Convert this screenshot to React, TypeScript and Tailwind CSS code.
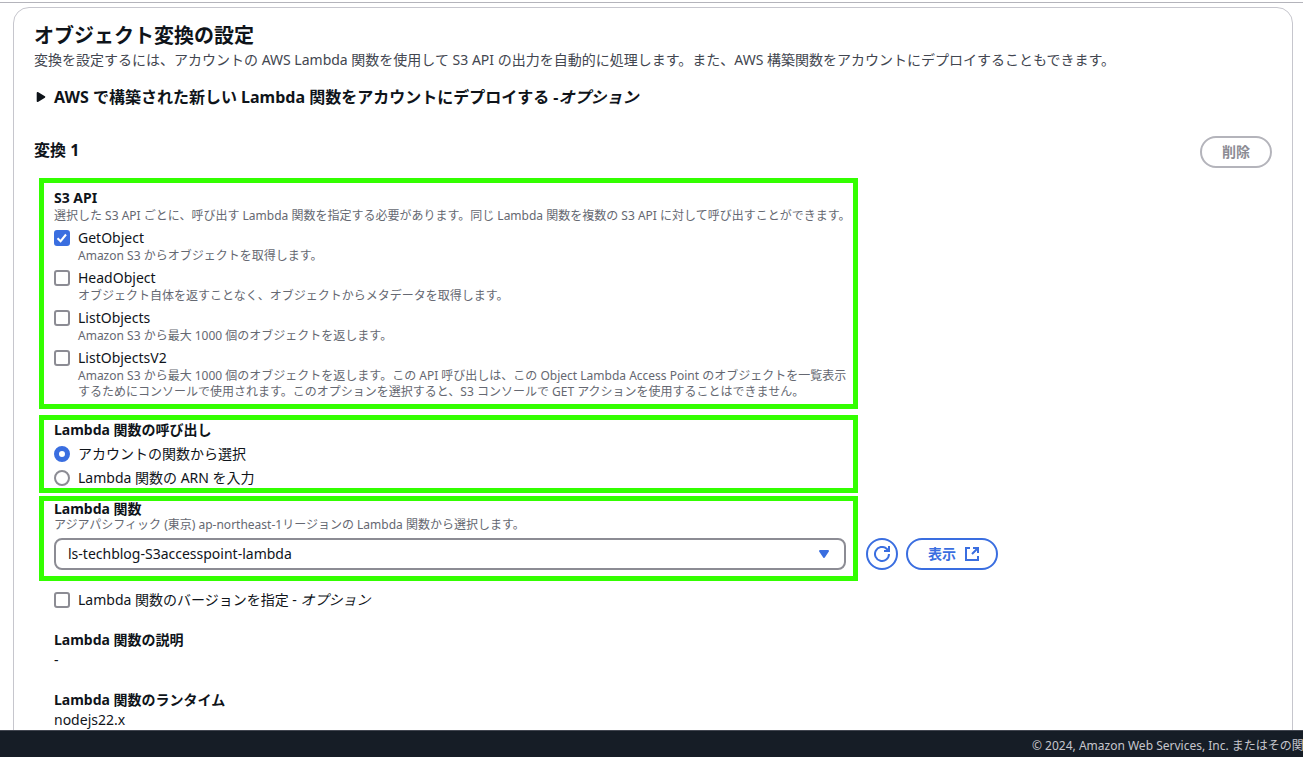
import { useState } from 'react';
import type { ReactNode } from 'react';

interface ApiOption {
  id: string;
  label: string;
  help: ReactNode;
}

const API_OPTIONS: ApiOption[] = [
  { id: 'GetObject', label: 'GetObject', help: 'Amazon S3 からオブジェクトを取得します。' },
  {
    id: 'HeadObject',
    label: 'HeadObject',
    help: 'オブジェクト自体を返すことなく、オブジェクトからメタデータを取得します。',
  },
  { id: 'ListObjects', label: 'ListObjects', help: 'Amazon S3 から最大 1000 個のオブジェクトを返します。' },
  {
    id: 'ListObjectsV2',
    label: 'ListObjectsV2',
    help: (
      <>
        Amazon S3 から最大 1000 個のオブジェクトを返します。この API 呼び出しは、この Object Lambda Access Point のオブジェクトを一覧表示
        <br />
        するためにコンソールで使用されます。このオプションを選択すると、S3 コンソールで GET アクションを使用することはできません。
      </>
    ),
  },
];

interface CheckboxProps {
  id: string;
  checked: boolean;
  onChange: () => void;
  label: ReactNode;
  help?: ReactNode;
}

function Checkbox({ id, checked, onChange, label, help }: CheckboxProps) {
  return (
    <div className="flex gap-2">
      <span className="relative mt-0.5 size-4 shrink-0">
        <input
          id={id}
          type="checkbox"
          checked={checked}
          onChange={onChange}
          aria-describedby={help ? `${id}-help` : undefined}
          className="block size-4 appearance-none rounded-[3px] border-2 border-[#8c8c94] bg-white checked:border-[#3a6ee0] checked:bg-[#3a6ee0]"
        />
        {checked && (
          <svg viewBox="0 0 16 16" className="pointer-events-none absolute inset-0 size-4" aria-hidden="true">
            <path d="M3.5 8.2 6.6 11.2 12 4.5" fill="none" stroke="#fff" strokeWidth="2" />
          </svg>
        )}
      </span>
      <div>
        <label htmlFor={id} className="block text-sm leading-5">
          {label}
        </label>
        {help && (
          <p id={`${id}-help`} className="text-xs leading-4 whitespace-nowrap text-[#656871]">
            {help}
          </p>
        )}
      </div>
    </div>
  );
}

interface RadioProps {
  id: string;
  name: string;
  checked: boolean;
  onChange: () => void;
  label: string;
}

function Radio({ id, name, checked, onChange, label }: RadioProps) {
  return (
    <div className="flex gap-2">
      <input
        id={id}
        name={name}
        type="radio"
        checked={checked}
        onChange={onChange}
        className="mt-0.5 block size-4 shrink-0 appearance-none rounded-full border-2 border-[#8c8c94] bg-white checked:border-5 checked:border-[#3a6ee0]"
      />
      <label htmlFor={id} className="text-sm leading-5">
        {label}
      </label>
    </div>
  );
}

export default function App() {
  const [apis, setApis] = useState<string[]>(['GetObject']);
  const [source, setSource] = useState('account');
  const [withVersion, setWithVersion] = useState(false);

  const toggleApi = (id: string) => {
    setApis((prev) => (prev.includes(id) ? prev.filter((a) => a !== id) : [...prev, id]));
  };

  return (
    <div className="flex h-screen flex-col overflow-hidden bg-white font-['Noto_Sans','Noto_Sans_CJK_JP',sans-serif] text-[#0f141a]">
      <main className="min-h-0 flex-1 overflow-hidden pt-0.5">
        <hr className="border-t border-[#b4b4bb]" />

        <section className="mt-1 mr-2.5 ml-[13px] rounded-2xl border border-[#c6c6cd] px-5 pt-4 pb-10">
          <h2 className="text-xl leading-6 font-bold">オブジェクト変換の設定</h2>
          <p className="mt-0.5 text-sm leading-5 text-[#424650]">
            変換を設定するには、アカウントの AWS Lambda 関数を使用して S3 API の出力を自動的に処理します。また、AWS 構築関数をアカウントにデプロイすることもできます。
          </p>

          <h3 className="mt-4 text-base leading-[22px] font-bold">
            <button type="button" aria-expanded="false" className="flex items-center gap-2">
              <svg viewBox="0 0 12 12" className="size-3" aria-hidden="true">
                <path d="M3.5 1.8v8.4L10.5 6z" fill="#0f141a" stroke="#0f141a" strokeWidth="1.6" strokeLinejoin="round" />
              </svg>
              <span>
                AWS で構築された新しい Lambda 関数をアカウントにデプロイする -<em>オプション</em>
              </span>
            </button>
          </h3>

          <div className="mt-7 flex justify-between">
            <h3 className="text-base leading-7 font-bold">変換 1</h3>
            <button
              type="button"
              disabled
              className="h-8 rounded-full border-2 border-[#b4b4bb] px-5 text-sm leading-5 font-bold text-[#8c8c94]"
            >
              削除
            </button>
          </div>

          <div className="mt-2.5 ml-[5px]">
            <fieldset className="max-w-[819px] min-w-0 border-5 border-[#33ff00] px-2.5 pt-[5px] pb-1">
              <div className="text-sm leading-5 font-bold">S3 API</div>
              <p className="text-xs leading-4 whitespace-nowrap text-[#656871]">
                選択した S3 API ごとに、呼び出す Lambda 関数を指定する必要があります。同じ Lambda 関数を複数の S3 API に対して呼び出すことができます。
              </p>
              <div className="mt-1 flex flex-col gap-1">
                {API_OPTIONS.map((o) => (
                  <Checkbox
                    key={o.id}
                    id={o.id}
                    checked={apis.includes(o.id)}
                    onChange={() => toggleApi(o.id)}
                    label={o.label}
                    help={o.help}
                  />
                ))}
              </div>
            </fieldset>

            <fieldset className="mt-1.5 max-w-[819px] min-w-0 border-5 border-[#33ff00] px-2.5">
              <div className="text-sm leading-5 font-bold">Lambda 関数の呼び出し</div>
              <div className="mt-1 flex flex-col gap-1">
                <Radio
                  id="source-account"
                  name="source"
                  checked={source === 'account'}
                  onChange={() => setSource('account')}
                  label="アカウントの関数から選択"
                />
                <Radio
                  id="source-arn"
                  name="source"
                  checked={source === 'arn'}
                  onChange={() => setSource('arn')}
                  label="Lambda 関数の ARN を入力"
                />
              </div>
            </fieldset>

            <div className="mt-[3px] flex items-end gap-2">
              <div className="max-w-[819px] min-w-0 flex-1 border-5 border-[#33ff00] pr-[7px] pb-1.5 pl-2.5">
                <label htmlFor="lambda" className="block text-sm leading-4 font-bold">
                  Lambda 関数
                </label>
                <p className="text-xs leading-4 text-[#656871]">
                  アジアパシフィック (東京) ap-northeast-1リージョンの Lambda 関数から選択します。
                </p>
                <div className="relative mt-[5px]">
                  <select
                    id="lambda"
                    className="block h-8 w-full appearance-none rounded-lg border-2 border-[#8c8c94] bg-white px-3 text-sm leading-5"
                  >
                    <option>ls-techblog-S3accesspoint-lambda</option>
                  </select>
                  <svg
                    viewBox="0 0 16 16"
                    className="pointer-events-none absolute top-2 right-3.5 size-4"
                    aria-hidden="true"
                  >
                    <path d="M4 5h8l-4 6z" fill="#3a6ee0" stroke="#3a6ee0" strokeWidth="2" strokeLinejoin="round" />
                  </svg>
                </div>
              </div>
              <button
                type="button"
                aria-label="更新"
                className="mb-[11px] flex size-8 shrink-0 items-center justify-center rounded-full border-2 border-[#3a6ee0]"
              >
                <svg viewBox="0 0 16 16" className="size-4" fill="none" stroke="#3a6ee0" strokeWidth="2" aria-hidden="true">
                  <path d="M15 8a7 7 0 1 1-2.4-5.3L15 5" />
                  <path d="M15 0v5h-5" />
                </svg>
              </button>
              <button
                type="button"
                className="mb-[11px] flex h-8 shrink-0 items-center gap-2 rounded-full border-2 border-[#3a6ee0] pr-4 pl-5 text-sm leading-5 font-bold text-[#3a6ee0]"
              >
                表示
                <svg viewBox="0 0 16 16" className="size-4" fill="none" stroke="#3a6ee0" strokeWidth="2" aria-hidden="true">
                  <path d="M6 2H2v12h12v-4" />
                  <path d="M9 2h5v5M14 2 8 8" />
                </svg>
              </button>
            </div>

            <div className="mt-[9px] ml-[15px]">
              <Checkbox
                id="version"
                checked={withVersion}
                onChange={() => setWithVersion(!withVersion)}
                label={
                  <>
                    Lambda 関数のバージョンを指定 - <em>オプション</em>
                  </>
                }
              />
              <dl className="mt-5 text-sm leading-5">
                <dt className="font-bold">Lambda 関数の説明</dt>
                <dd>-</dd>
                <dt className="mt-5 font-bold">Lambda 関数のランタイム</dt>
                <dd>nodejs22.x</dd>
              </dl>
            </div>
          </div>
        </section>
      </main>

      <footer className="flex h-[27px] shrink-0 justify-end border-t border-[#424650] bg-[#161d26] pt-[7px]">
        <p className="w-[271px] overflow-hidden text-xs leading-4 whitespace-nowrap text-[#c6c6cd]">
          © 2024, Amazon Web Services, Inc. またはその関連
        </p>
      </footer>
    </div>
  );
}
